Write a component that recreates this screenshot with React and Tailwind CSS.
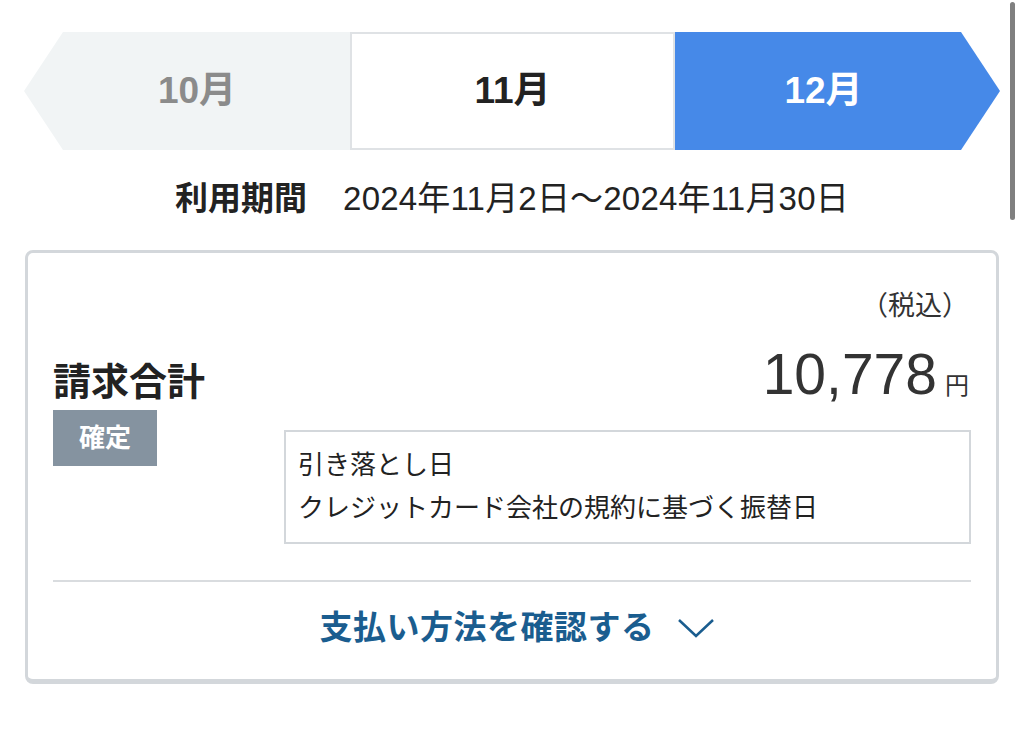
import React from "react";

const font = { fontFamily: '"Liberation Sans", "Noto Sans CJK JP", sans-serif' };

function MonthTabs() {
    return (
        <div className="flex h-[118px] w-full">
            <div className="flex w-[326px] items-center justify-center bg-[#f1f4f5] pl-[20px] text-[37px] font-bold text-[#8b8b8b] [clip-path:polygon(39px_0,100%_0,100%_100%,39px_100%,0_50%)]">
                10月
            </div>
            <div className="flex w-[325px] items-center justify-center border-2 border-[#dfe2e5] bg-white text-[37px] font-bold text-[#222]">
                11月
            </div>
            <div className="flex w-[325px] items-center justify-center bg-[#4689e8] pr-[28px] text-[37px] font-bold text-white [clip-path:polygon(0_0,calc(100%-39px)_0,100%_50%,calc(100%-39px)_100%,0_100%)]">
                12月
            </div>
        </div>
    );
}

export default function App() {
    return (
        <div className="relative min-h-[730px] w-[1024px] bg-white text-[#222]" style={font}>
            {/* overlay scrollbar */}
            <div className="absolute left-[1010px] top-[2px] h-[218px] w-[5px] rounded-full bg-[#808080]" />

            <div className="px-[24px] pt-[32px]">
                <MonthTabs />

                <div className="mt-[32px] flex items-center justify-center gap-[36px] leading-[33px]">
                    <span className="text-[33px] font-bold">利用期間</span>
                    <span className="text-[33px] tracking-[0.2px]">2024年11月2日～2024年11月30日</span>
                </div>

                <div className="mx-[1px] mt-[35px] rounded-[8px] border-[3px] border-b-[5px] border-[#d3d7db] px-[25px] pb-[35px] pt-[35px]">
                    <div className="flex">
                        <div className="w-[231px] pt-[75px]">
                            <div className="text-[38px] font-bold leading-[38px]">請求合計</div>
                            <div className="mt-[9px] flex h-[56px] w-[104px] items-center justify-center bg-[#8593a0] text-[26px] font-bold text-white">
                                確定
                            </div>
                        </div>
                        <div className="flex flex-1 flex-col items-end">
                            <div className="pr-[2px] text-[27px] leading-[36px] text-[#333]">（税込）</div>
                            <div className="mt-[22px] flex items-baseline text-[#333]">
                                <span className="text-[57px] leading-[56px]">10,778</span>
                                <span className="ml-[8px] pr-[2px] text-[24px]">円</span>
                            </div>
                            <div className="mt-[26px] w-full border-2 border-[#d3d7db] px-[12px] pb-[12px] pt-[12px] text-[26px] leading-[43px] text-[#222]">
                                <div>引き落とし日</div>
                                <div>クレジットカード会社の規約に基づく振替日</div>
                            </div>
                        </div>
                    </div>

                    <div className="mt-[36px] h-[2px] bg-[#d9dcdf]" />

                    <div className="flex items-center justify-center gap-[22px] pl-[10px] pt-[29px]">
                        <span className="text-[33px] font-bold leading-[33px] tracking-[0.5px] text-[#1a5d8f]">支払い方法を確認する</span>
                        <svg width="38" height="20" viewBox="0 0 38 20" fill="none" stroke="#1a5d8f" strokeWidth="2.5">
                            <path d="M2 2 L19 18 L36 2" />
                        </svg>
                    </div>
                </div>
            </div>
        </div>
    );
}
